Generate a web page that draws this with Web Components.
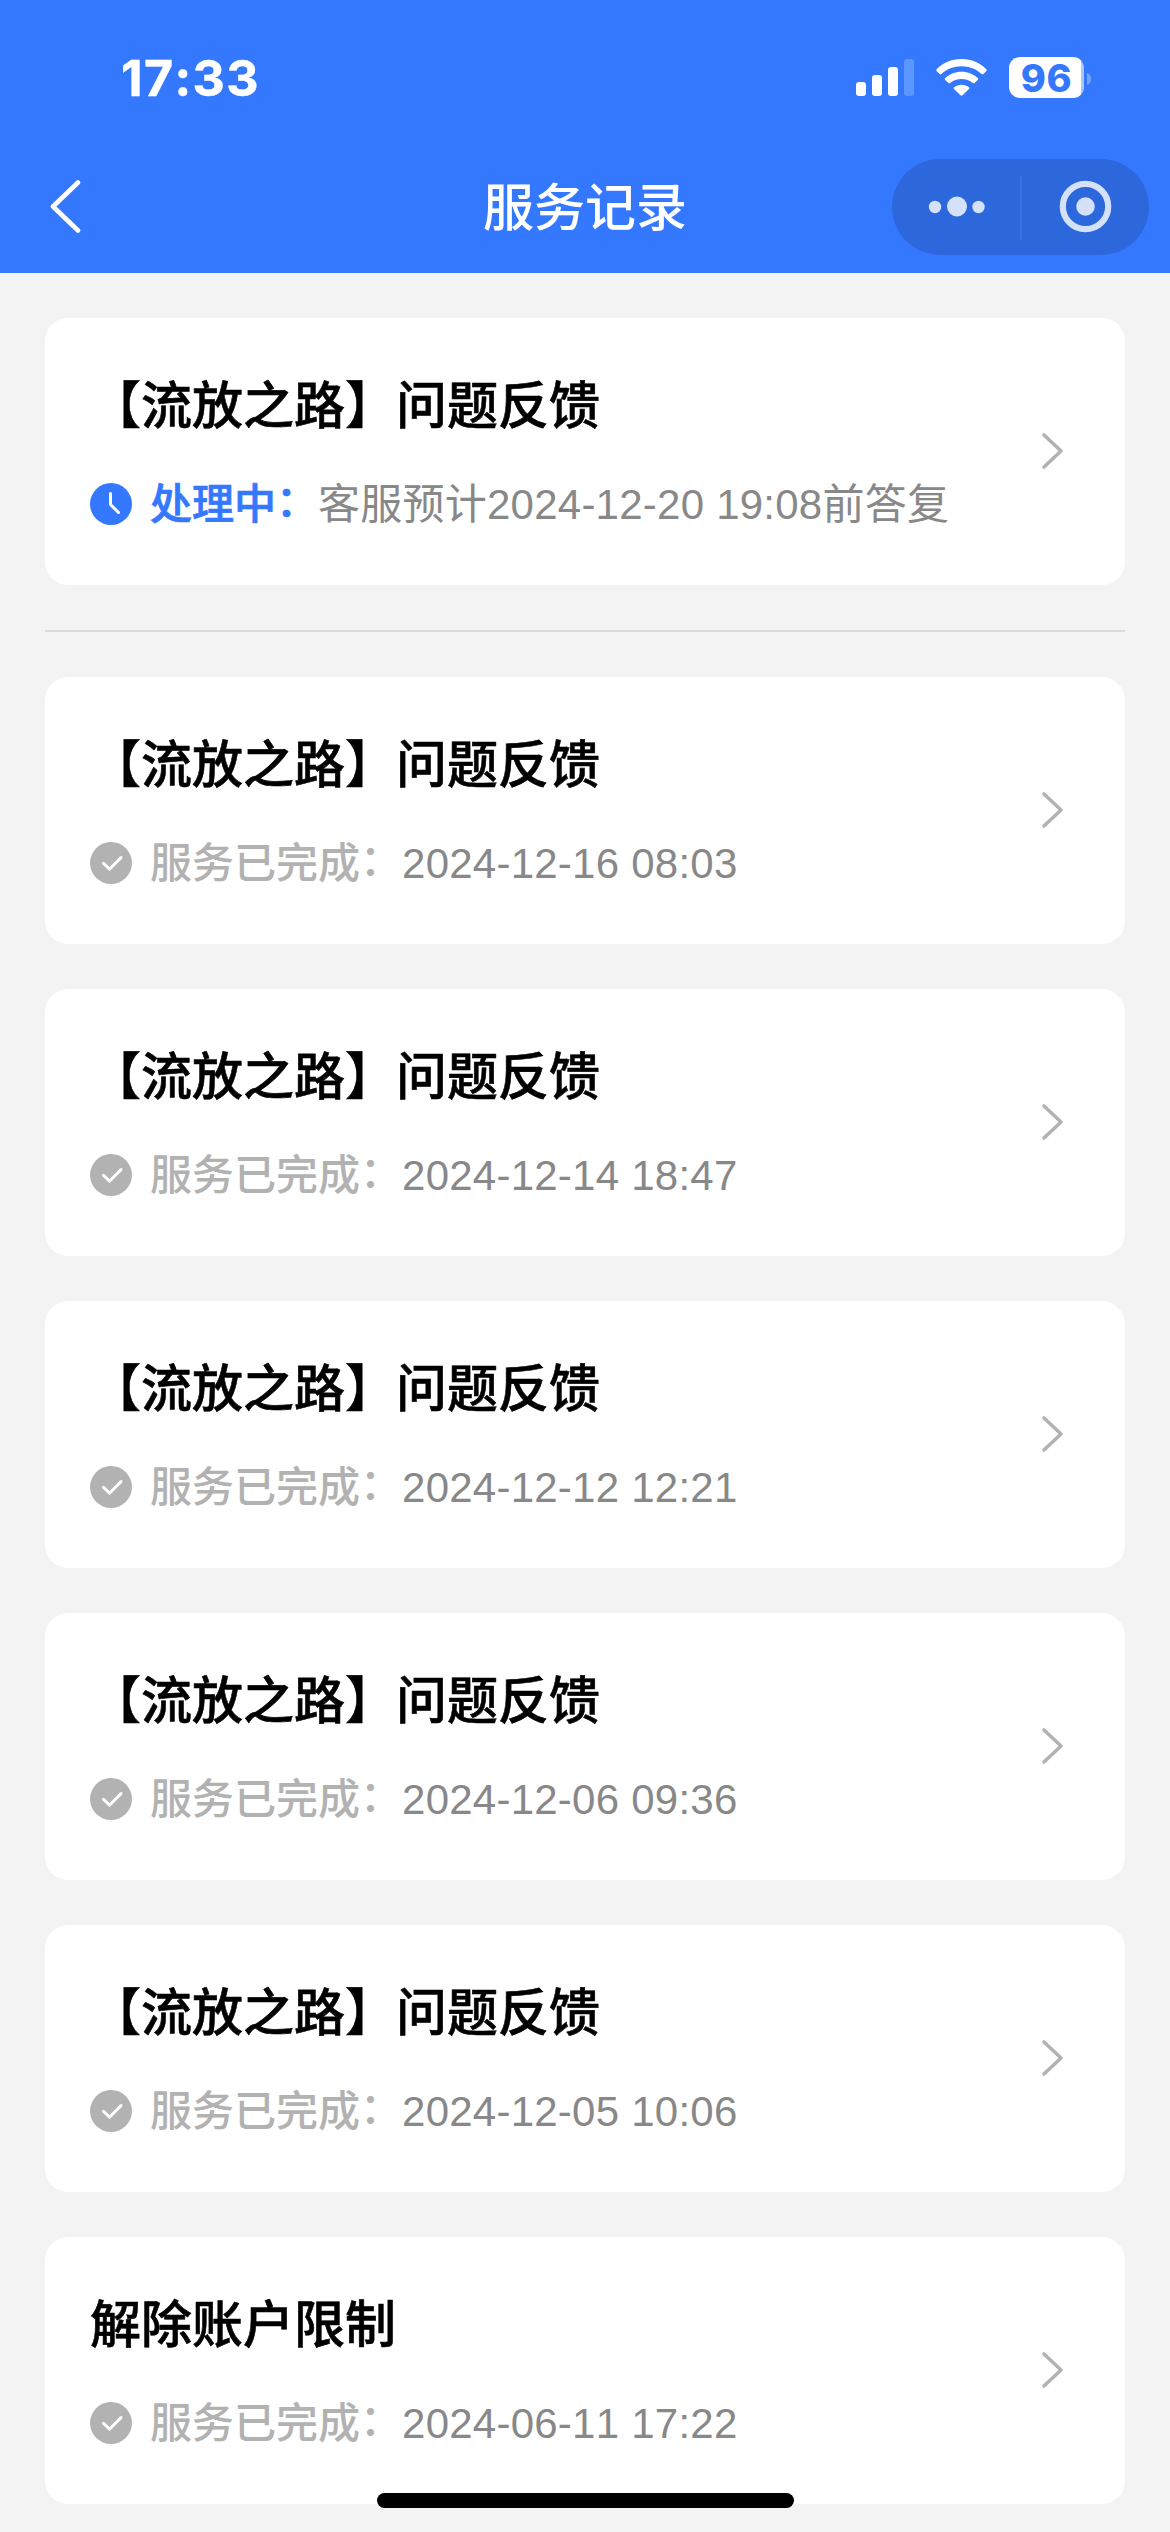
<!DOCTYPE html>
<html lang="zh-CN">
<head>
<meta charset="utf-8">
<title>服务记录</title>
<style>
html,body{margin:0;padding:0}
body{width:1170px;height:2532px;overflow:hidden;background:#f3f3f3;font-family:"Liberation Sans","Noto Sans CJK SC",sans-serif}
</style>
</head>
<body>
<service-page></service-page>
<script>
const define = (name, html, setup) => customElements.define(name, class extends HTMLElement {
  connectedCallback() {
    if (this.shadowRoot) return;
    const root = this.attachShadow({ mode: 'open' });
    const t = document.createElement('template');
    t.innerHTML = html;
    root.append(t.content.cloneNode(true));
    if (setup) setup(this, root);
  }
});

define('status-bar', `
<style>
:host{display:flex;height:157px;padding:0 79px 0 121px;box-sizing:border-box;justify-content:space-between;color:#fff;font-family:Inter,sans-serif}
.time{font-size:50px;font-weight:750;line-height:60px;margin-top:48px;letter-spacing:1.400px;font-kerning:none;-webkit-text-stroke:.5px #fff}
.right{display:flex;align-items:flex-start;padding-top:57px}
svg{display:block}
.signal{margin:2px 22px 0 0}
.wifi{margin:2px 22px 0 0}
.battery{width:75px;height:41px;border-radius:11px;background:linear-gradient(90deg,#fff 72px,#a9c7ff 72px);color:#3478ff;font-size:38px;font-weight:800;line-height:42px;text-align:center;letter-spacing:.5px}
.nub{margin:16px 0 0 3px}
</style>
<div class="time">17:33</div>
<div class="right">
<svg class="signal" width="58" height="37" viewBox="0 0 58 37" fill="#fff"><rect y="23" width="10" height="14" rx="3"/><rect x="16" y="16" width="10" height="21" rx="3"/><rect x="32" y="8" width="10" height="29" rx="3"/><rect x="48" width="10" height="37" rx="3" fill="#5c97ff"/></svg>
<svg class="wifi" width="51" height="37" viewBox="0 0 51 37" fill="#fff"><path d="M25.500 0C35.500 0 44.500 4 50.300 10.200Q51.200 11.300 50.200 12.300L47.400 15Q46.500 15.700 45.600 14.900C40.300 10.100 33.400 7.300 25.500 7.300S10.700 10.100 5.400 14.900Q4.500 15.700 3.600 15L.8 12.300Q-.2 11.300.7 10.200C6.500 4 15.500 0 25.500 0Z"/><path d="M25.500 12.800C32 12.800 37.700 15.300 41.800 19.100Q42.700 20.100 41.700 21.100L38.600 24Q37.700 24.700 36.800 24C33.700 21.500 29.900 20 25.500 20S17.300 21.500 14.200 24Q13.300 24.700 12.400 24L9.300 21.100Q8.300 20.100 9.200 19.100C13.300 15.300 19 12.800 25.500 12.800Z"/><path d="M25.500 25.800C28.400 25.800 31 26.700 33 28.200Q33.900 29.100 33 30L26.500 36.300Q25.500 37.100 24.500 36.300L18 30Q17.100 29.100 18 28.200C20 26.700 22.600 25.800 25.500 25.800Z"/></svg>
<div class="battery">96</div>
<svg class="nub" width="4" height="12" viewBox="0 0 4 12"><path d="M0 0Q4 1.500 4 6T0 12Z" fill="#73a6ff"/></svg>
</div>`);

define('nav-bar', `
<style>
:host{display:grid;grid-template-columns:1fr auto 1fr;height:116px;color:#fff}
svg{display:block}
.back{margin:23px 0 0 48px}
.title{font-size:51px;line-height:72px;margin-top:16px;font-weight:500}
.capsule{justify-self:end;display:flex;align-items:center;width:257px;height:96px;margin:2px 21px 0 0;border-radius:48px;background:#2c68db}
</style>
<svg class="back" width="34" height="54" viewBox="0 0 34 54"><path d="M30 2.500L5 26.500L30 50.500" fill="none" stroke="#fff" stroke-width="4.600" stroke-linejoin="round" stroke-linecap="round"/></svg>
<div class="title"><slot></slot></div>
<div class="capsule">
<svg width="257" height="96" viewBox="0 0 257 96" fill="#d4e1f8"><circle cx="43" cy="48" r="6.200"/><circle cx="65" cy="47.500" r="10"/><circle cx="86.500" cy="48" r="6.200"/><path d="M129 17v64" stroke="#3b77e6" stroke-width="1.500"/><circle cx="193.500" cy="47.500" r="22.700" fill="none" stroke="#d4e1f8" stroke-width="6.200"/><circle cx="193.500" cy="47.500" r="9.300"/></svg>
</div>`);

define('state-icon', `
<style>:host{display:block;width:42px;height:42px;margin-bottom:1px}svg{display:block}</style>
<svg width="42" height="42" viewBox="0 0 42 42" fill="none" stroke-linecap="round" stroke-linejoin="round"></svg>`, (el, root) => {
  root.querySelector('svg').innerHTML = el.getAttribute('kind') === 'pending'
    ? '<circle cx="21" cy="21" r="21" fill="#3478ff"/><path d="M20.500 10.500V21.500L28.500 29.500" stroke="#fff" stroke-width="3"/>'
    : '<circle cx="21" cy="21" r="21" fill="#b2b2b2"/><path d="M13.500 21.300L19.500 27.300L31 15.600" stroke="#fff" stroke-width="3"/>';
});

define('record-card', `
<style>
:host{display:flex;align-items:center;justify-content:space-between;height:267px;box-sizing:border-box;padding:0 61px 0 45px;border-radius:23px;background:#fff}
.body{display:flex;flex-direction:column;gap:32px;padding-top:2px}
.title{font-size:51px;line-height:72px;font-weight:500;color:#000;white-space:nowrap;text-spacing-trim:space-all;-webkit-text-stroke:.6px #000}
.status{display:flex;align-items:center;height:60px;font-size:42px;line-height:60px;white-space:nowrap;color:#888}
.label{margin-left:18px;font-weight:500;color:#b2b2b2;text-spacing-trim:space-all}
.colon{vertical-align:3px;line-height:1}
.detail{letter-spacing:.24px;font-kerning:none}
:host([kind=pending]) .label{color:#3478ff;-webkit-text-stroke:.7px #3478ff}
svg{display:block;margin-bottom:1px}
</style>
<div class="body">
<div class="title"><slot></slot></div>
<div class="status"><state-icon></state-icon><span class="label"><span class="name"></span><span class="colon">：</span></span><span class="detail"><slot name="detail"></slot></span></div>
</div>
<svg width="23" height="38" viewBox="0 0 23 38"><path d="M3 3L20 19L3 35" fill="none" stroke="#b2b2b2" stroke-width="3.600" stroke-linecap="round" stroke-linejoin="round"/></svg>`, (el, root) => {
  const pending = el.getAttribute('kind') === 'pending';
  root.querySelector('.name').textContent = pending ? '处理中' : '服务已完成';
  const icon = document.createElement('state-icon');
  icon.setAttribute('kind', pending ? 'pending' : 'done');
  root.querySelector('state-icon').replaceWith(icon);
});

define('service-page', `
<style>
:host{display:block;width:1170px;height:2532px;overflow:hidden;position:relative;background:#f3f3f3}
header{height:273px;background:#3478ff}
main{display:flex;flex-direction:column;gap:45px;padding:45px}
hr{width:100%;height:2px;margin:0;border:0;background:#dadada}
.home{position:absolute;left:377px;top:2493px;width:417px;height:15px;border-radius:8px;background:#000}
</style>
<header><status-bar></status-bar><nav-bar>服务记录</nav-bar></header>
<main>
<record-card kind="pending">【流放之路】问题反馈<span slot="detail">客服预计2024-12-20 19:08前答复</span></record-card>
<hr>
<record-card>【流放之路】问题反馈<span slot="detail">2024-12-16 08:03</span></record-card>
<record-card>【流放之路】问题反馈<span slot="detail">2024-12-14 18:47</span></record-card>
<record-card>【流放之路】问题反馈<span slot="detail">2024-12-12 12:21</span></record-card>
<record-card>【流放之路】问题反馈<span slot="detail">2024-12-06 09:36</span></record-card>
<record-card>【流放之路】问题反馈<span slot="detail">2024-12-05 10:06</span></record-card>
<record-card>解除账户限制<span slot="detail">2024-06-11 17:22</span></record-card>
</main>
<div class="home"></div>`);
</script>
</body>
</html>
